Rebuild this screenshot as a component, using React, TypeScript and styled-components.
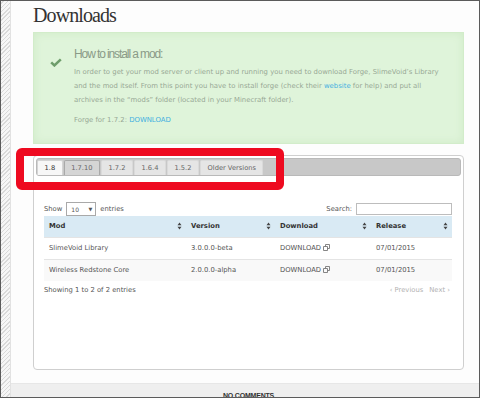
import React, { FC } from 'react';
import styled, { createGlobalStyle } from 'styled-components';

const GlobalStyle = createGlobalStyle`
  html, body {
    margin: 0;
    padding: 0;
    background: #ffffff;
  }
`;

const Frame = styled.div`
  position: relative;
  width: 480px;
  height: 398px;
  box-sizing: border-box;
  border: 1px solid #5b5b5b;
  display: flex;
  overflow: hidden;
  background: #fdfdfd;
  font-family: "DejaVu Sans", Verdana, sans-serif;
`;

const Stripe = styled.div`
  width: 9px;
  flex-shrink: 0;
  border-right: 1px solid #e2e2e2;
  background: repeating-linear-gradient(-45deg, #f6f6f6 0 2px, #d9d9d9 2px 3px);
`;

const Main = styled.div`
  flex: 1;
  min-width: 0;
  display: flex;
  flex-direction: column;
`;

const Content = styled.div`
  padding: 2px 15px 0 22px;
  margin-bottom: 13px;
`;

const Heading = styled.h1`
  margin: 0;
  font-family: "Liberation Serif", "Times New Roman", serif;
  font-weight: normal;
  font-size: 20px;
  letter-spacing: -0.9px;
  line-height: 24px;
  color: #333333;
`;

const Notice = styled.div`
  margin-top: 5px;
  display: flex;
  overflow: hidden;
  padding: 13px 16px 16px 16px;
  background: #dff4da;
  border: 1px solid #d2ecca;
  box-shadow: inset 0 0 8px #cfeac7;
`;

const IconCol = styled.div`
  width: 24px;
  flex-shrink: 0;
  padding-top: 6px;
`;

const NoticeBody = styled.div`
  display: flex;
  flex-direction: column;
  min-width: 0;
`;

const NoticeTitle = styled.div`
  font-family: "Liberation Sans", Arial, sans-serif;
  font-size: 12px;
  letter-spacing: -1.1px;
  line-height: 16px;
  color: #8a9a87;
`;

const NoticeText = styled.p<{ $gap: number }>`
  margin: ${p => p.$gap}px 0 0 0;
  font-size: 6.9px;
  line-height: 14px;
  color: #98a895;
  white-space: nowrap;
`;

const Link = styled.span`
  color: #45b0e0;
`;

const Card = styled.div`
  margin-top: 11px;
  border: 1px solid #cfcfcf;
  border-radius: 4px;
  background: #ffffff;
  padding: 2px;
`;

const TabBar = styled.div`
  height: 18px;
  box-sizing: border-box;
  display: flex;
  align-items: stretch;
  gap: 1px;
  padding-top: 1px;
  background: #c8c8c8;
  border: 1px solid #b9b9b9;
  border-radius: 3px;
`;

const Tab = styled.div<{ $state: 'active' | 'hover' | 'normal' }>`
  display: flex;
  align-items: center;
  padding: 0 6.5px;
  font-size: 6.7px;
  border: 1px solid ${p => (p.$state === 'hover' ? '#a9a9a9' : p.$state === 'active' ? '#d4d4d4' : '#dadada')};
  border-bottom: none;
  border-radius: 2px 2px 0 0;
  color: ${p => (p.$state === 'active' ? '#333' : '#666')};
  background: ${p => (p.$state === 'active' ? '#f7f7f7' : p.$state === 'hover' ? '#d5d5d5' : '#e5e5e5')};
`;

const Body = styled.div`
  padding: 26px 9px 71px 8px;
  font-size: 6.8px;
  color: #555;
`;

const Controls = styled.div`
  height: 14px;
  display: flex;
  justify-content: space-between;
  align-items: center;
`;

const Group = styled.div`
  display: flex;
  align-items: center;
  gap: 4px;
`;

const Select = styled.div`
  width: 30px;
  height: 14px;
  box-sizing: border-box;
  border: 1px solid #a9a9a9;
  display: flex;
  align-items: center;
  justify-content: space-between;
  padding: 0 3px 0 4px;
  font-size: 6px;
`;

const SearchInput = styled.div`
  width: 96px;
  height: 12px;
  box-sizing: border-box;
  border: 1px solid #bdbdbd;
`;

const Table = styled.table`
  width: 100%;
  border-collapse: collapse;
  table-layout: fixed;
`;

const Th = styled.th<{ $w: number }>`
  box-sizing: border-box;
  width: ${p => p.$w}px;
  height: 21px;
  padding: 0 4px 0 5px;
  background: #d9eaf4;
  text-align: left;
  font-weight: bold;
  color: #333;
`;

const HeadInner = styled.div`
  display: flex;
  align-items: center;
  justify-content: space-between;
`;

const Tr = styled.tr<{ $odd: boolean }>`
  background: ${p => (p.$odd ? '#f9f9f9' : '#ffffff')};
`;

const Td = styled.td`
  box-sizing: border-box;
  height: 22px;
  padding: 0 5px;
  border-top: 1px solid #e4e4e4;
  white-space: nowrap;
`;

const Info = styled.div`
  margin-top: 3px;
  line-height: 12px;
  display: flex;
  justify-content: space-between;
`;

const Pager = styled.div`
  display: flex;
  gap: 6px;
  color: #b2b2b2;
  padding-right: 2px;
`;

const Footer = styled.div`
  flex: 1;
  background: #efefef;
  border-top: 1px solid #e7e7e7;
  padding: 8px 0 0 7px;
  text-align: center;
  font-family: "Liberation Sans", Arial, sans-serif;
  font-weight: bold;
  font-size: 7px;
  color: #333;
  letter-spacing: -0.2px;
`;

const Highlight = styled.div`
  position: absolute;
  left: 15px;
  top: 147px;
  width: 268px;
  height: 42px;
  box-sizing: border-box;
  border: 8px solid #ee0a20;
  border-radius: 6px;
  pointer-events: none;
`;

const Check: FC = () => (
  <svg width="12" height="9" viewBox="0 0 12 9">
    <path d="M1.2 4.4 L4.4 7.4 L10.8 1.4" fill="none" stroke="#6e9d6b" strokeWidth="2.6" />
  </svg>
);

const SortIcon: FC = () => (
  <svg width="5" height="8" viewBox="0 0 5 8">
    <path d="M0.5 3.3 L2.5 0.5 L4.5 3.3Z M0.5 4.7 L2.5 7.5 L4.5 4.7Z" fill="#444" />
  </svg>
);

const ExtIcon: FC = () => (
  <svg width="7" height="7" viewBox="0 0 7 7" style={{ marginLeft: 2, verticalAlign: -1 }}>
    <path d="M0.5 2.5 H4.5 V6.5 H0.5Z M2.5 2.5 V0.5 H6.5 V4.5 H4.5" fill="none" stroke="#777" strokeWidth="0.9" />
  </svg>
);

const tabs: { label: string; state: 'active' | 'hover' | 'normal' }[] = [
  { label: '1.8', state: 'active' },
  { label: '1.7.10', state: 'hover' },
  { label: '1.7.2', state: 'normal' },
  { label: '1.6.4', state: 'normal' },
  { label: '1.5.2', state: 'normal' },
  { label: 'Older Versions', state: 'normal' },
];

const columns = [
  { title: 'Mod', width: 142 },
  { title: 'Version', width: 89 },
  { title: 'Download', width: 96 },
  { title: 'Release', width: 81 },
];

const mods = [
  { name: 'SlimeVoid Library', version: '3.0.0.0-beta', release: '07/01/2015' },
  { name: 'Wireless Redstone Core', version: '2.0.0.0-alpha', release: '07/01/2015' },
];

const App: FC = () => (
  <>
    <GlobalStyle />
    <Frame>
      <Stripe />
      <Main>
        <Content>
          <Heading>Downloads</Heading>
          <Notice>
            <IconCol>
              <Check />
            </IconCol>
            <NoticeBody>
              <NoticeTitle>How to install a mod:</NoticeTitle>
              <NoticeText $gap={3}>
                In order to get your mod server or client up and running you need to download Forge, SlimeVoid’s Library
                <br />
                and the mod itself. From this point you have to install forge (check their <Link>website</Link> for help) and put all
                <br />
                archives in the “mods” folder (located in your Minecraft folder).
              </NoticeText>
              <NoticeText $gap={6}>
                Forge for 1.7.2: <Link>DOWNLOAD</Link>
              </NoticeText>
            </NoticeBody>
          </Notice>
          <Card>
            <TabBar>
              {tabs.map(t => (
                <Tab key={t.label} $state={t.state}>{t.label}</Tab>
              ))}
            </TabBar>
            <Body>
              <Controls>
                <Group>
                  Show
                  <Select>
                    <span>10</span>
                    <span style={{ fontSize: 5 }}>▼</span>
                  </Select>
                  entries
                </Group>
                <Group>
                  Search:
                  <SearchInput />
                </Group>
              </Controls>
              <Table>
                <thead>
                  <tr>
                    {columns.map(c => (
                      <Th key={c.title} $w={c.width}>
                        <HeadInner>
                          {c.title}
                          <SortIcon />
                        </HeadInner>
                      </Th>
                    ))}
                  </tr>
                </thead>
                <tbody>
                  {mods.map((m, i) => (
                    <Tr key={m.name} $odd={i % 2 === 1}>
                      <Td>{m.name}</Td>
                      <Td>{m.version}</Td>
                      <Td>
                        DOWNLOAD
                        <ExtIcon />
                      </Td>
                      <Td>{m.release}</Td>
                    </Tr>
                  ))}
                </tbody>
              </Table>
              <Info>
                <span>Showing 1 to 2 of 2 entries</span>
                <Pager>
                  <span>‹ Previous</span>
                  <span>Next ›</span>
                </Pager>
              </Info>
            </Body>
          </Card>
        </Content>
        <Footer>NO COMMENTS</Footer>
      </Main>
      <Highlight />
    </Frame>
  </>
);

export default App;
